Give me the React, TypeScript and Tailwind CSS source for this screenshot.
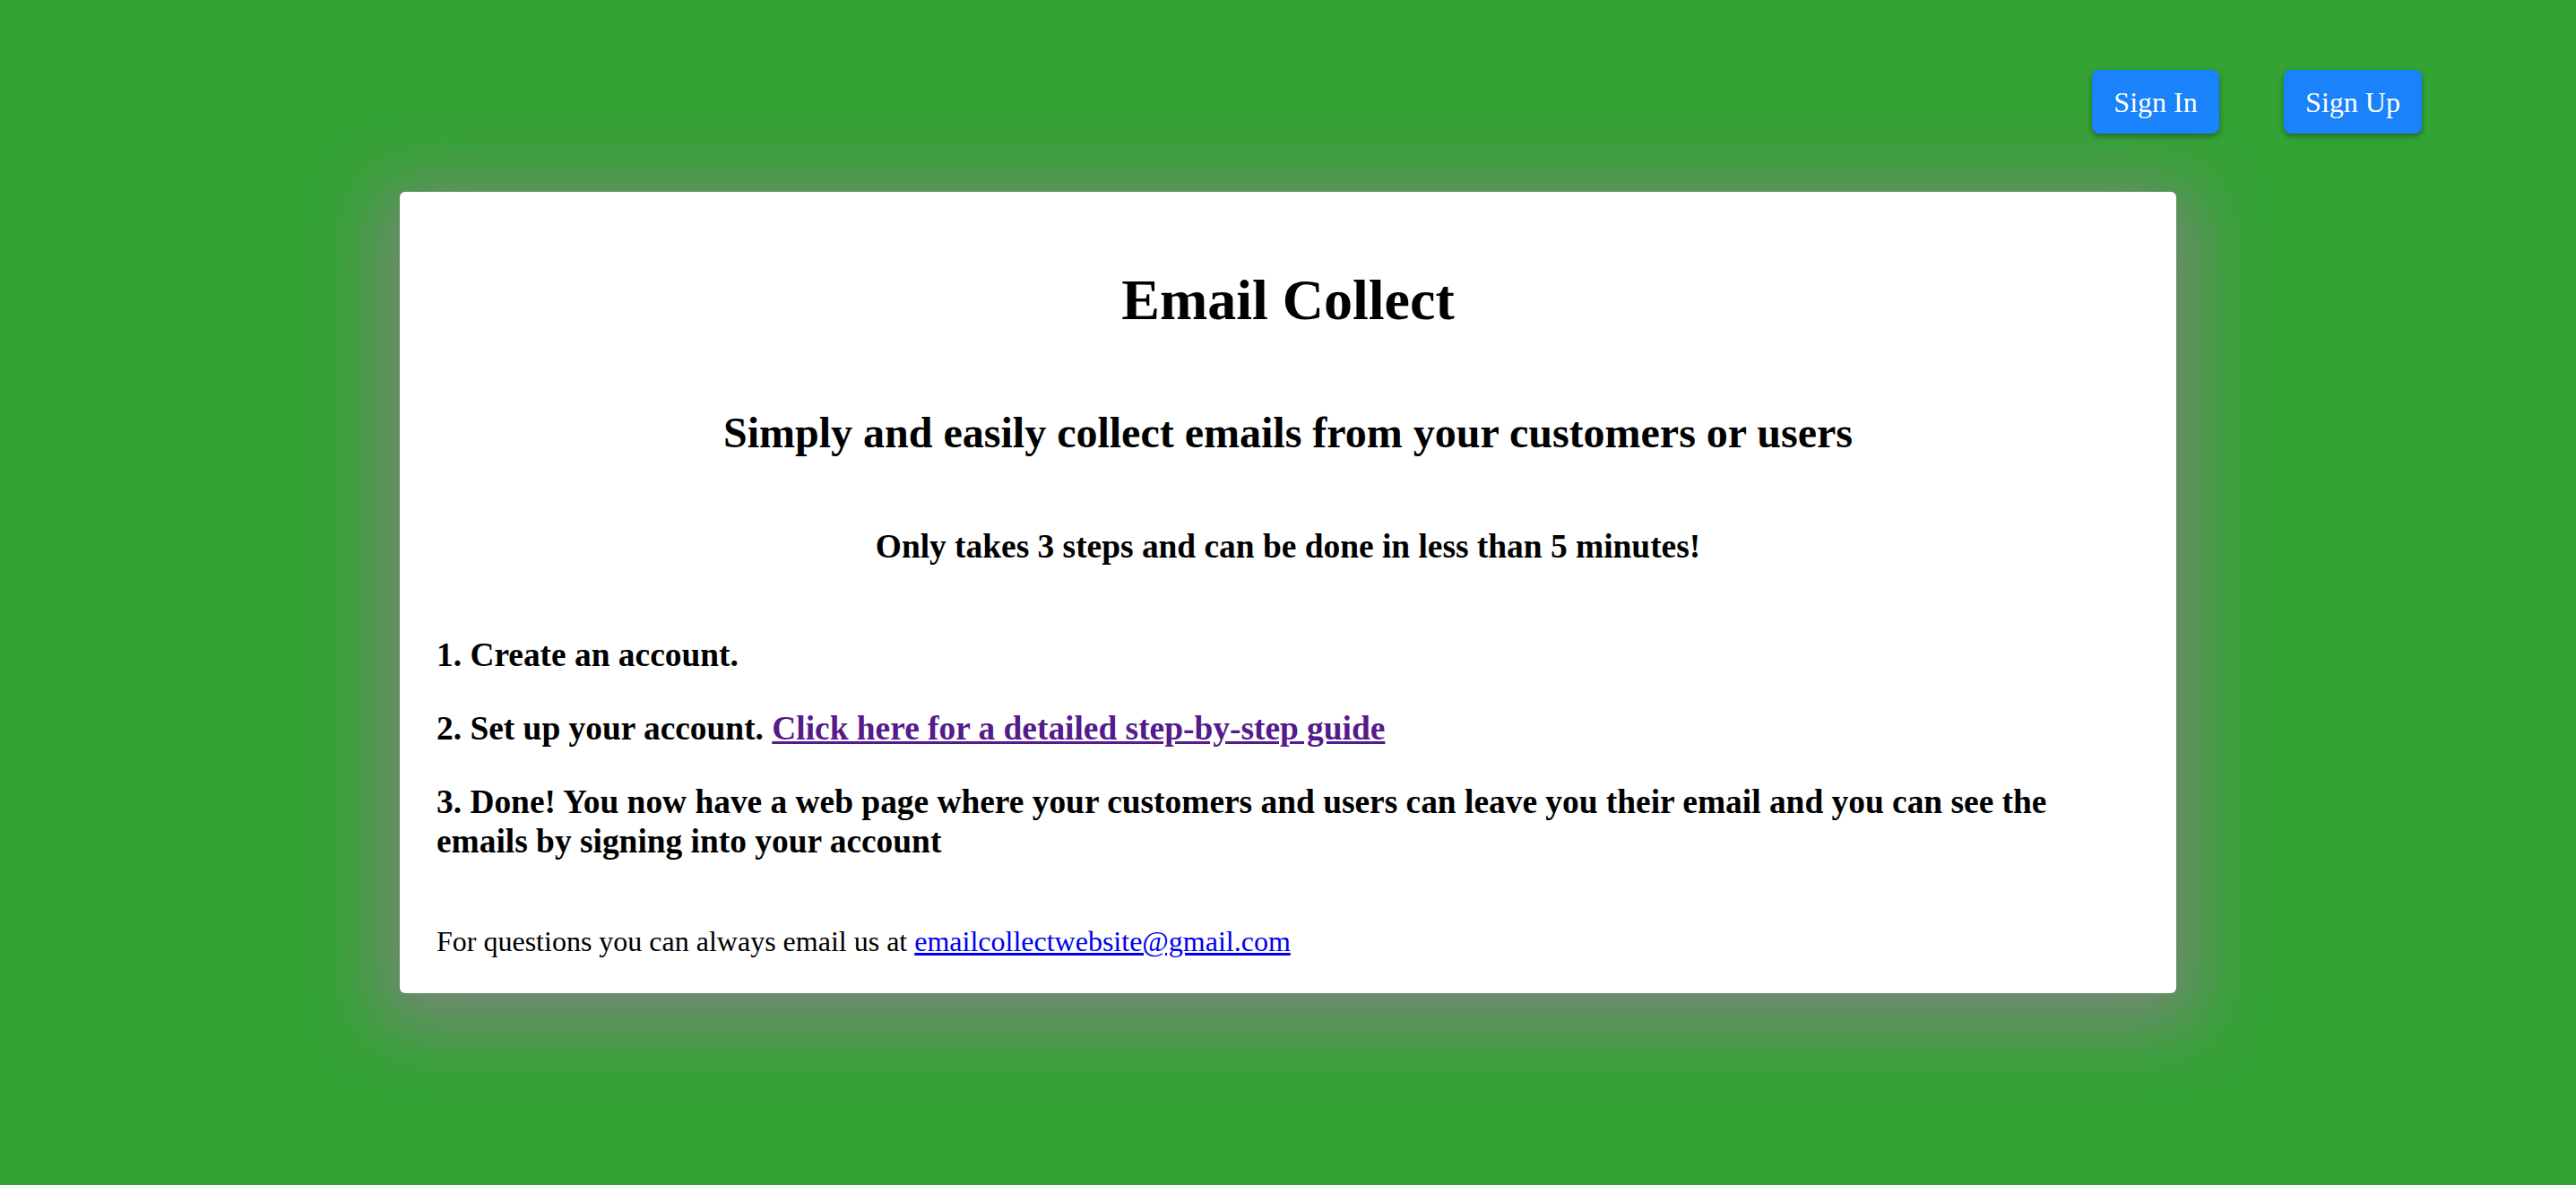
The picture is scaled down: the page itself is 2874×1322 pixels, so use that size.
const serif = { fontFamily: '"Liberation Serif", "Times New Roman", serif' };

const App = () => {
  return (
    <div
      className="min-h-screen w-full bg-[#33a334] text-black"
      style={serif}
    >
      {/* Top nav */}
      <div className="flex justify-end gap-[72px] pt-[78px] pr-[172px]">
        <button className="h-[71px] w-[142px] rounded-lg bg-[#1a82fb] text-[32px] text-white shadow-[0_3px_6px_rgba(0,0,0,0.35)]">
          Sign In
        </button>
        <button className="h-[71px] w-[154px] rounded-lg bg-[#1a82fb] text-[32px] text-white shadow-[0_3px_6px_rgba(0,0,0,0.35)]">
          Sign Up
        </button>
      </div>

      {/* Card */}
      <div className="mx-auto mt-[65px] w-[1982px] rounded-md bg-white px-[41px] pt-[84px] pb-[39px] shadow-[0_16px_80px_24px_rgba(130,130,130,0.85)]">
        <h1 className="text-center text-[64px] leading-[1.15] font-bold">
          Email Collect
        </h1>
        <h2 className="mt-[83px] text-center text-[48px] leading-[1.15] font-bold">
          Simply and easily collect emails from your customers or users
        </h2>
        <h3 className="mt-[78px] text-center text-[37.4px] leading-[1.15] font-bold">
          Only takes 3 steps and can be done in less than 5 minutes!
        </h3>

        <div className="mt-[78px] flex flex-col gap-[37px] text-[37.4px] leading-[1.2] font-bold">
          <p>1. Create an account.</p>
          <p>
            2. Set up your account.{" "}
            <a href="#" className="text-[#551a8b] underline">
              Click here for a detailed step-by-step guide
            </a>
          </p>
          <p>
            3. Done! You now have a web page where your customers and users can
            leave you their email and you can see the emails by signing into
            your account
          </p>
        </div>

        <p className="mt-[70px] text-[32px] leading-[1.15]">
          For questions you can always email us at{" "}
          <a href="#" className="text-[#0000ee] underline">
            emailcollectwebsite@gmail.com
          </a>
        </p>
      </div>
    </div>
  );
};

export default App;
